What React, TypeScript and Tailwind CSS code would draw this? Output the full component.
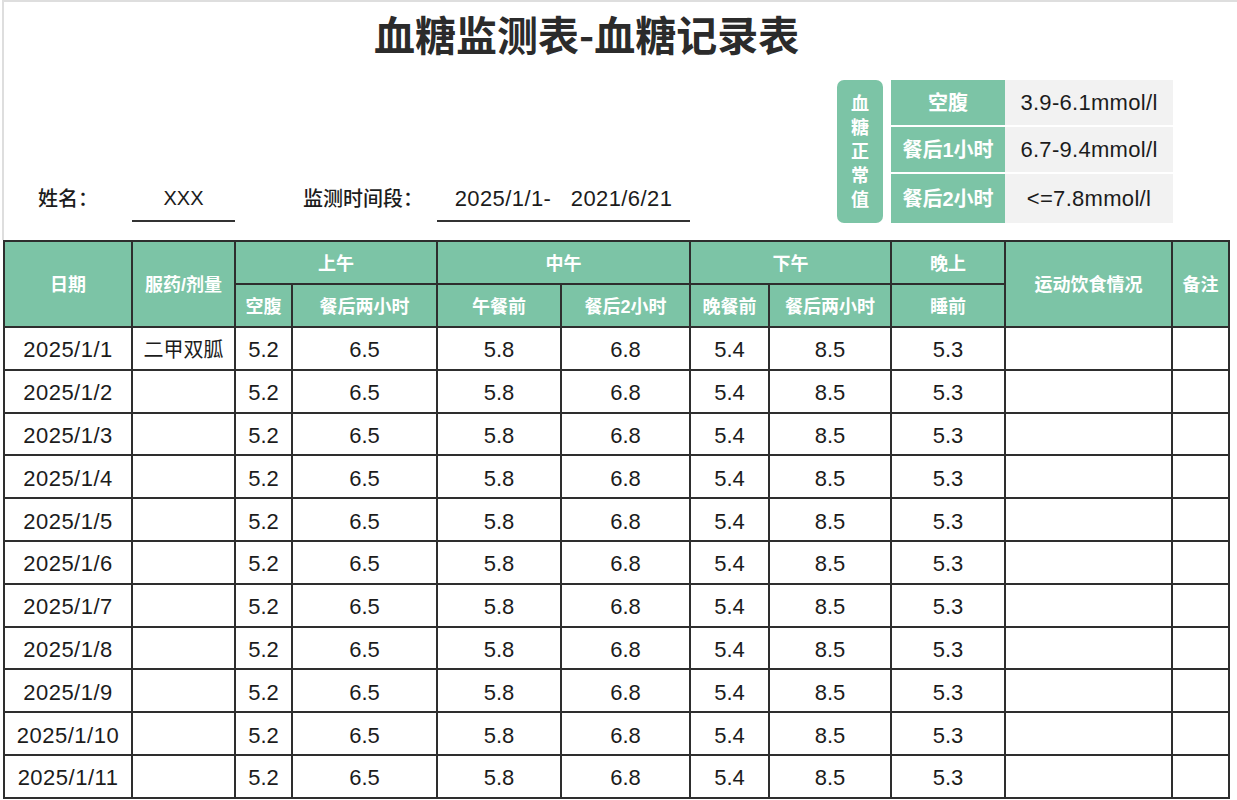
import React from "react";

const GREEN = "bg-[#7cc4a6]";

const values = ["5.2", "6.5", "5.8", "6.8", "5.4", "8.5", "5.3"];
const widths = [128, 103, 57, 145, 124, 129, 79, 122, 114, 167, 57];

function HeadCell({
  children,
  rowSpan,
  colSpan,
}: {
  children: React.ReactNode;
  rowSpan?: number;
  colSpan?: number;
}) {
  return (
    <th
      rowSpan={rowSpan}
      colSpan={colSpan}
      className="border-2 border-[#2e2e2e] bg-[#7cc4a6] text-white text-[18px] font-bold text-center align-middle p-0 pt-[3px] whitespace-nowrap"
    >
      {children}
    </th>
  );
}

function Cell({ children, wide }: { children?: React.ReactNode; wide?: boolean }) {
  return (
    <td
      className={`border-2 border-[#2e2e2e] text-center align-middle p-0 pt-[3px] text-[22px] text-[#1c1c1c] whitespace-nowrap ${
        wide ? "tracking-[0.5px]" : ""
      }`}
    >
      {children}
    </td>
  );
}

export default function App() {
  const rows = Array.from({ length: 11 }, (_, i) => i + 1);
  return (
    <div className="w-[1237px] h-[800px] bg-white overflow-hidden font-['Liberation_Sans','Noto_Sans_CJK_SC',sans-serif] text-[#1c1c1c]">
      {/* top section */}
      <div className="h-[240px] ml-[2px] border-t-2 border-l-2 border-[#dedede] flex">
        <div className="w-[833px] flex flex-col">
          <div className="h-[62px] flex items-center pl-[370px]">
            <span className="text-[41px] font-bold leading-none text-[#2b2b2b] font-['Noto_Sans_CJK_SC',sans-serif]">
              血糖监测表-血糖记录表
            </span>
          </div>
          <div className="flex-1" />
          <div className="flex pb-[18px]">
            <div className="w-[128px] h-[46px] flex items-center justify-center text-[20px] font-medium">
              姓名：
            </div>
            <div className="w-[103px] h-[46px] flex items-center justify-center text-[20px] border-b-2 border-[#333]">
              XXX
            </div>
            <div className="w-[202px] h-[46px] flex items-center justify-end pr-[14px] text-[20px] font-medium">
              监测时间段：
            </div>
            <div className="w-[253px] h-[46px] flex items-center justify-center text-[22px] tracking-[0.4px] border-b-2 border-[#333] whitespace-pre">
              {"2025/1/1-   2021/6/21"}
            </div>
          </div>
        </div>
        <div className="mt-[78px] flex gap-[8px] h-[143px]">
          <div
            className={`w-[46px] h-[143px] rounded-[7px] ${GREEN} flex flex-col items-center justify-center text-white font-bold text-[18px] leading-[24px]`}
          >
            <span>血</span>
            <span>糖</span>
            <span>正</span>
            <span>常</span>
            <span>值</span>
          </div>
          <div className="w-[282px] flex flex-col gap-[2px]">
            {[
              ["空腹", "3.9-6.1mmol/l", "h-[45px]"],
              ["餐后1小时", "6.7-9.4mmol/l", "h-[45px]"],
              ["餐后2小时", "<=7.8mmol/l", "h-[49px]"],
            ].map(([k, v, h]) => (
              <div key={k} className={`flex ${h}`}>
                <div
                  className={`w-[114px] ${GREEN} flex items-center justify-center text-white font-bold text-[20px]`}
                >
                  {k}
                </div>
                <div className="w-[168px] bg-[#f2f2f2] flex items-center justify-center text-[22px] tracking-[0.3px] text-[#1c1c1c]">
                  {v}
                </div>
              </div>
            ))}
          </div>
        </div>
      </div>

      {/* table */}
      <div className="pl-[3px]">
        <table className="border-collapse table-fixed w-[1227px]">
          <colgroup>
            {widths.map((w, i) => (
              <col key={i} style={{ width: w }} />
            ))}
          </colgroup>
          <thead>
            <tr className="h-[43px]">
              <HeadCell rowSpan={2}>日期</HeadCell>
              <HeadCell rowSpan={2}>服药/剂量</HeadCell>
              <HeadCell colSpan={2}>上午</HeadCell>
              <HeadCell colSpan={2}>中午</HeadCell>
              <HeadCell colSpan={2}>下午</HeadCell>
              <HeadCell>晚上</HeadCell>
              <HeadCell rowSpan={2}>运动饮食情况</HeadCell>
              <HeadCell rowSpan={2}>备注</HeadCell>
            </tr>
            <tr className="h-[43px]">
              <HeadCell>空腹</HeadCell>
              <HeadCell>餐后两小时</HeadCell>
              <HeadCell>午餐前</HeadCell>
              <HeadCell>餐后2小时</HeadCell>
              <HeadCell>晚餐前</HeadCell>
              <HeadCell>餐后两小时</HeadCell>
              <HeadCell>睡前</HeadCell>
            </tr>
          </thead>
          <tbody>
            {rows.map((d) => (
              <tr key={d} className="h-[42.8px]">
                <Cell wide>{`2025/1/${d}`}</Cell>
                <td className="border-2 border-[#2e2e2e] text-center align-middle p-0 pt-[3px] text-[20px] text-[#1c1c1c] whitespace-nowrap">
                  {d === 1 ? "二甲双胍" : ""}
                </td>
                {values.map((v, i) => (
                  <Cell key={i}>{v}</Cell>
                ))}
                <Cell />
                <Cell />
              </tr>
            ))}
          </tbody>
        </table>
      </div>
    </div>
  );
}
